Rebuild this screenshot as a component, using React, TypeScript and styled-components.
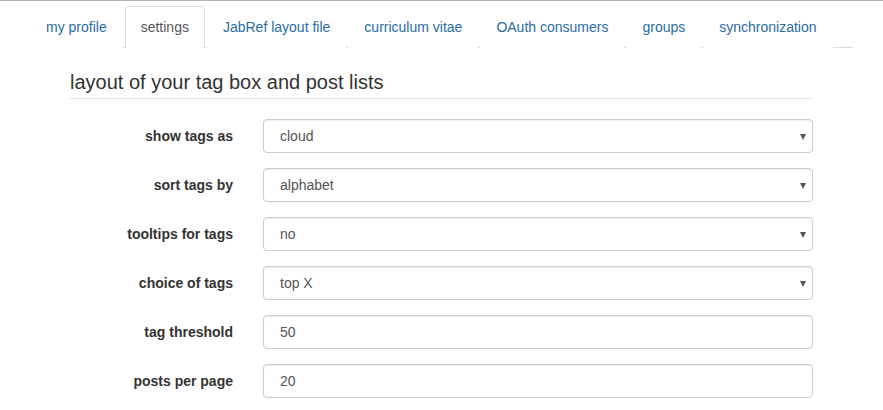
import React from "react"
import styled, { createGlobalStyle } from "styled-components"

const GlobalStyle = createGlobalStyle`
  html, body {
    margin: 0;
    padding: 0;
    background: #fff;
    font-family: "Liberation Sans", Arial, sans-serif;
    font-size: 14px;
    color: #333;
  }
`

const Page = styled.div`
  border-top: 1px solid #b4b4b4;
  padding: 5px 30px 0 30px;
  width: 823px;
`

const Tabs = styled.ul`
  list-style: none;
  margin: 0;
  padding: 0;
  display: flex;
  border-bottom: 1px solid #ddd;
`

const Tab = styled.li<{ $active?: boolean }>`
  margin-right: 2px;
  margin-bottom: -1px;
  a {
    display: block;
    padding: 10px 15px;
    line-height: 20px;
    text-decoration: none;
    border: 1px solid ${(p) => (p.$active ? "#ddd" : "transparent")};
    border-bottom-color: ${(p) => (p.$active ? "#fff" : "transparent")};
    border-radius: 4px 4px 0 0;
    background: #fff;
    color: ${(p) => (p.$active ? "#555" : "#2a6ca5")};
  }
`

const Section = styled.section`
  padding: 0 40px;
`

const Heading = styled.h3`
  margin: 23px 0 20px;
  padding-bottom: 5px;
  border-bottom: 1px solid #e5e5e5;
  font-size: 20px;
  font-weight: normal;
  line-height: 22px;
  color: #333;
`

const Form = styled.form`
  display: grid;
  grid-template-columns: 163px 550px;
  column-gap: 30px;
  row-gap: 15px;
`

const Label = styled.label`
  font-weight: bold;
  text-align: right;
  line-height: 34px;
  color: #333;
`

const SelectWrap = styled.div`
  position: relative;
`

const Control = styled.input`
  box-sizing: border-box;
  width: 100%;
  height: 34px;
  padding: 6px 16px;
  font: inherit;
  color: #555;
  background: #fff;
  border: 1px solid #ccc;
  border-radius: 4px;
  box-shadow: inset 0 1px 1px rgba(0, 0, 0, 0.075);
  outline: none;
`

const Select = styled.select`
  box-sizing: border-box;
  width: 100%;
  height: 34px;
  padding: 6px 16px;
  font: inherit;
  color: #555;
  background: #fff;
  border: 1px solid #ccc;
  border-radius: 4px;
  box-shadow: inset 0 1px 1px rgba(0, 0, 0, 0.075);
  appearance: none;
  outline: none;
`

const Caret = styled.span`
  position: absolute;
  right: 7px;
  top: 15px;
  width: 0;
  height: 0;
  border-left: 3px solid transparent;
  border-right: 3px solid transparent;
  border-top: 6px solid #555;
  pointer-events: none;
`

const tabs = [
  "my profile",
  "settings",
  "JabRef layout file",
  "curriculum vitae",
  "OAuth consumers",
  "groups",
  "synchronization",
]

const rows: { label: string; value: string; select?: boolean }[] = [
  { label: "show tags as", value: "cloud", select: true },
  { label: "sort tags by", value: "alphabet", select: true },
  { label: "tooltips for tags", value: "no", select: true },
  { label: "choice of tags", value: "top X", select: true },
  { label: "tag threshold", value: "50" },
  { label: "posts per page", value: "20" },
]

export default function App() {
  return (
    <>
      <GlobalStyle />
      <Page>
        <Tabs>
          {tabs.map((t) => (
            <Tab key={t} $active={t === "settings"}>
              <a href="#">{t}</a>
            </Tab>
          ))}
        </Tabs>
        <Section>
          <Heading>layout of your tag box and post lists</Heading>
          <Form>
            {rows.map((r) => (
              <React.Fragment key={r.label}>
                <Label>{r.label}</Label>
                {r.select ? (
                  <SelectWrap>
                    <Select defaultValue={r.value}>
                      <option>{r.value}</option>
                    </Select>
                    <Caret />
                  </SelectWrap>
                ) : (
                  <Control defaultValue={r.value} />
                )}
              </React.Fragment>
            ))}
          </Form>
        </Section>
      </Page>
    </>
  )
}
